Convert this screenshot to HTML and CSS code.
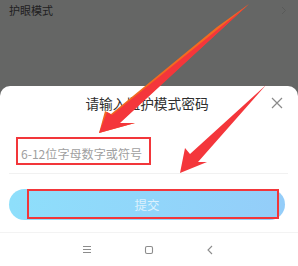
FILE: index.html
```html
<!DOCTYPE html>
<html lang="zh">
<head>
<meta charset="utf-8">
<link rel="stylesheet" href="styles.css">
</head>
<body>
<div class="page">
  <div class="top">
    <div class="row">
      <span class="row-label">护眼模式</span>
      <svg class="chev" width="6" height="9" viewBox="0 0 6 9"><path d="M1 1 L4.5 4.5 L1 8" fill="none" stroke="#595a59" stroke-width="1"/></svg>
    </div>
  </div>
  <div class="sheet">
    <div class="head">
      <span></span>
      <span class="title">请输入监护模式密码</span>
      <svg class="close" width="12" height="12" viewBox="0 0 12 12"><path d="M1 1 L11 11 M11 1 L1 11" stroke="#8a8a8a" stroke-width="1.2" fill="none"/></svg>
    </div>
    <div class="field"><span class="ph">6-12位字母数字或符号</span></div>
    <div class="btn">提交</div>
    <div class="nav">
      <svg width="10" height="9" viewBox="0 0 10 9"><path d="M1 1.5 H9 M1 4.5 H9 M1 7.5 H9" stroke="#8c8c8c" stroke-width="1" fill="none"/></svg>
      <svg width="10" height="10" viewBox="0 0 10 10"><rect x="1.5" y="1.5" width="7" height="7" rx="1.5" stroke="#8c8c8c" stroke-width="1.1" fill="none"/></svg>
      <svg width="8" height="10" viewBox="0 0 8 10"><path d="M6 1 L2 5 L6 9" stroke="#8c8c8c" stroke-width="1.1" fill="none"/></svg>
    </div>
  </div>
  <svg class="annot" width="298" height="266" viewBox="0 0 298 266">
    <rect x="17" y="138" width="133" height="26" fill="none" stroke="#f2363a" stroke-width="2"/>
    <rect x="28" y="190" width="250" height="28" fill="none" stroke="#f2363a" stroke-width="2"/>
    <polygon points="99,133 105,111 111,114 217,27 249,4 119,123 135,123" fill="#f36a1f"/>
    <polygon points="99,133 107,112 112,115 249,4 120,123 135,123" fill="#f4363b"/>
    <polygon points="180,173 185,148 190,154 266,85 198,162 207,162" fill="#f4363b"/>
  </svg>
</div>
</body>
</html>
```
FILE: styles.css
```css
html, body {
  margin: 0;
  padding: 0;
}
body {
  width: 298px;
  height: 266px;
  overflow: hidden;
  background: #656665;
  font-family: "Noto Sans CJK SC", "Noto Sans", sans-serif;
}
.page {
  position: relative;
  width: 298px;
  height: 266px;
}
.top {
  height: 86px;
}
.row {
  height: 20px;
  display: flex;
  align-items: center;
  justify-content: space-between;
  padding: 0 11px 0 9px;
}
.row-label {
  font-size: 11px;
  color: #1f201f;
  line-height: 20px;
}
.sheet {
  background: #ffffff;
  border-radius: 10px 10px 0 0;
  height: 180px;
  display: flex;
  flex-direction: column;
}
.head {
  display: grid;
  grid-template-columns: 30px 1fr 30px;
  align-items: center;
  padding: 7px 10px 0 6px;
  height: 20px;
}
.title {
  text-align: center;
  font-size: 13.7px;
  line-height: 20px;
  color: #2e2e2e;
}
.close {
  justify-self: end;
  margin-right: 5px;
}
.field {
  margin: 20px 10px 0 9px;
  height: 40px;
  border-bottom: 1px solid #f1f1f1;
  display: flex;
  align-items: center;
  padding-left: 12px;
}
.ph {
  font-size: 12.1px;
  color: #a0a0a0;
}
.btn {
  margin: 15px 13px 0 9px;
  height: 31px;
  border-radius: 16px;
  background: linear-gradient(90deg, #8edffb, #94cdf9);
  color: #dcf1fd;
  font-size: 12.5px;
  display: flex;
  align-items: center;
  justify-content: center;
}
.nav {
  margin-top: 12px;
  border-top: 1px solid #f3f3f3;
  flex: 1;
  display: flex;
  align-items: center;
  justify-content: center;
  gap: 52px;
  padding-right: 2px;
}
.annot {
  position: absolute;
  top: 0;
  left: 0;
  pointer-events: none;
}
```
